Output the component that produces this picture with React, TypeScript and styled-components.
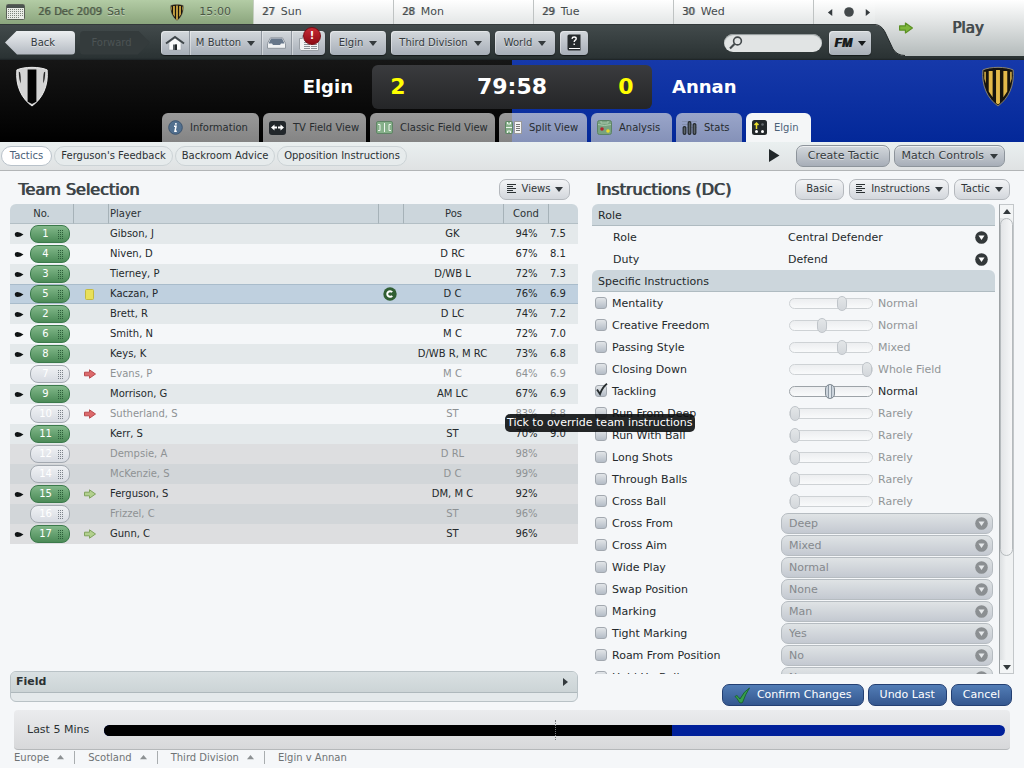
import React from 'react';
import styled, { createGlobalStyle, css } from 'styled-components';

const GlobalStyle = createGlobalStyle`
  *, *::before, *::after { box-sizing: border-box; }
  body {
    margin: 0;
    background: #f5f7f9;
    color: #2b3133;
    font-family: "DejaVu Sans", Verdana, sans-serif;
    font-size: 10px;
    line-height: 14px;
  }
  button, select, input { font: inherit; color: inherit; margin: 0; }
  button { cursor: pointer; white-space: nowrap; }
  a { color: inherit; text-decoration: none; }
  h2 { margin: 0; font-weight: normal; }
`;

const Page = styled.div`
  display: flex;
  flex-direction: column;
  height: 100vh;
  min-height: 640px;
  overflow: hidden;
`;

/* ---------- header ---------- */

const Header = styled.header`
  display: grid;
  grid-template-columns: minmax(0, 1fr) 149px;
  height: 60px;
  background: linear-gradient(#434b4c 24px, #2a3233 58px, #1c2224 60px);
`;

const Calendar = styled.div`
  display: grid;
  grid-template-columns: 254fr 140fr 140fr 140fr 140fr 61fr;
  height: 25px;
  border-bottom: 1px solid #33393a;
  background: linear-gradient(#ffffff, #e3e6e6);
`;

const Today = styled.div`
  display: flex;
  align-items: center;
  padding: 0 22px 0 6px;
  background: linear-gradient(#b3cca5, #8ba57d);
  border-right: 1px solid #c4cec0;
  font-size: 11px;
  color: #4a5745;
  text-shadow: 0 1px 0 rgba(255, 255, 255, 0.4);
`;

const TodayDate = styled.span`
  margin: 0 5px 0 13px;
  font-size: 10px;
  text-shadow: 1px 0 0 rgba(74, 87, 69, 0.6);
`;

const KickOff = styled.span`
  display: flex;
  align-items: center;
  gap: 15px;
  margin-left: auto;
`;

const Day = styled.div`
  display: flex;
  align-items: center;
  gap: 6px;
  padding: 0 8px;
  border-right: 1px solid #bfc3c3;
  font-size: 11px;
  color: #454b4d;
`;

const DayNumber = styled.span`
  font-size: 10px;
  text-shadow: 1px 0 0 rgba(69, 75, 77, 0.7);
`;

const DayNav = styled.div`
  display: flex;
  align-items: center;
  justify-content: center;
  gap: 10px;
  padding-left: 8px;
`;

const IconButton = styled.button`
  display: inline-flex;
  align-items: center;
  justify-content: center;
  padding: 0;
  border: 0;
  background: none;
`;

const Toolbar = styled.nav`
  display: flex;
  align-items: center;
  height: 35px;
  padding: 0 4px 0 5px;
  gap: 5px;
`;

const steel = css`
  background: linear-gradient(#d3d8dc, #a7aeb8);
  color: #343a3d;
  text-shadow: 0 1px 0 rgba(255, 255, 255, 0.5);
`;

const Back = styled.button`
  width: 70px;
  height: 24px;
  padding: 0 0 0 6px;
  border: 0;
  border-radius: 4px;
  clip-path: polygon(0 50%, 12px 0, 100% 0, 100% 100%, 12px 100%);
  ${steel}
  background: linear-gradient(#eceff1, #b2b8c0);
`;

const Forward = styled.button`
  width: 70px;
  height: 24px;
  margin-right: 6px;
  padding: 0 7px 0 0;
  border: 0;
  border-radius: 4px;
  clip-path: polygon(0 0, 58px 0, 100% 50%, 58px 100%, 0 100%);
  background: #343b3c;
  color: #4c5354;
`;

const ToolGroup = styled.div`
  display: flex;
  height: 24px;
  border-radius: 4px;
  box-shadow: 0 1px 1px #15191a;
  ${steel}
`;

const Tool = styled.button<{ $w: number }>`
  position: relative;
  display: flex;
  align-items: center;
  justify-content: center;
  gap: 6px;
  width: ${(p) => p.$w}px;
  height: 24px;
  padding: 0;
  border: 0;
  border-right: 1px solid #8f969e;
  box-shadow: inset 1px 1px 0 rgba(255, 255, 255, 0.4);
  background: none;
  text-shadow: inherit;
  &:first-child { border-radius: 4px 0 0 4px; }
  &:last-child { border-right: 0; border-radius: 0 4px 4px 0; }
  &:only-child { border-radius: 4px; }
`;

const Alert = styled.span`
  position: absolute;
  top: -4px;
  right: 4px;
  width: 18px;
  height: 18px;
  border-radius: 9px;
  border: 1px solid #7a0c14;
  background: linear-gradient(#c62a34, #8e0a14);
  color: #fff;
  text-shadow: none;
  line-height: 16px;
  text-align: center;
  font-weight: bold;
`;

const Search = styled.label`
  display: flex;
  align-items: center;
  width: 98px;
  height: 18px;
  margin-left: auto;
  margin-right: 2px;
  padding: 0 8px 0 5px;
  border-radius: 9px;
  background: #e1e4e4;
  box-shadow: inset 0 1px 1px #8f9697;
  input { flex: 1; min-width: 0; border: 0; padding: 0 4px; background: none; outline: none; }
`;

const Fm = styled.span`
  font-family: "Liberation Sans", Arial, sans-serif;
  font-size: 12px;
  font-weight: bold;
  font-style: italic;
  color: #15191b;
  text-shadow: 1px 0 0 #15191b;
`;

const PlayButton = styled.button`
  position: relative;
  display: flex;
  align-items: center;
  height: 56px;
  padding: 0 0 0 24px;
  gap: 39px;
  border: 0;
  background: none;
  color: #43494c;
  font-size: 15px;
  text-shadow: 1px 0 0 #43494c;
  > svg:first-child { position: absolute; inset: 0; }
  > * { position: relative; }
`;

/* ---------- scoreboard ---------- */

const Scoreboard = styled.section`
  display: flex;
  flex-direction: column;
  justify-content: space-between;
  height: 82px;
  background:
    linear-gradient(#161616, #000000) left / 50% 100% no-repeat,
    linear-gradient(#1639aa, #032899);
`;

const ScoreRow = styled.div`
  display: grid;
  grid-template-columns: 1fr 280px 1fr;
  align-items: center;
  height: 53px;
  color: #fff;
  font-size: 18px;
  font-weight: bold;
`;

const Side = styled.div<{ $away?: boolean }>`
  display: flex;
  flex-direction: ${(p) => (p.$away ? 'row-reverse' : 'row')};
  justify-content: space-between;
  align-items: center;
  padding: ${(p) => (p.$away ? '0 9px 0 20px' : '0 19px 0 15px')};
`;

const Score = styled.div`
  display: grid;
  grid-template-columns: 52px 1fr 52px;
  align-items: center;
  height: 44px;
  border-radius: 6px;
  background: linear-gradient(#3a3b3e, #242527);
  font-size: 22px;
  text-align: center;
  b { color: #ffff00; }
`;

const Tabs = styled.nav`
  display: flex;
  gap: 4px;
  padding: 0 162px;
`;

const Tab = styled.a<{ $w: number; $active?: boolean }>`
  display: flex;
  align-items: center;
  gap: 7px;
  flex: none;
  width: ${(p) => p.$w}px;
  height: 29px;
  padding-left: 6px;
  border-radius: 6px 6px 0 0;
  white-space: nowrap;
  background: ${(p) => (p.$active ? '#f4f6f7' : 'linear-gradient(rgba(222,222,222,0.68), rgba(200,200,200,0.66))')};
  color: ${(p) => (p.$active ? '#4c6178' : '#272c2f')};
`;

/* ---------- sub navigation ---------- */

const SubNav = styled.nav`
  display: flex;
  align-items: center;
  gap: 2px;
  height: 29px;
  padding: 0 19px 1px 1px;
  border-bottom: 1px solid #b2b5b7;
  background: linear-gradient(#eaf0f0, #dfe2e3);
`;

const Pill = styled.a<{ $w: number; $active?: boolean }>`
  width: ${(p) => p.$w}px;
  height: 20px;
  border: 1px solid ${(p) => (p.$active ? '#b9c2ca' : '#ccd3d6')};
  border-radius: 10px;
  line-height: 18px;
  text-align: center;
  white-space: nowrap;
  background: ${(p) => (p.$active ? '#ffffff' : '#e6ebec')};
  color: ${(p) => (p.$active ? '#4c6178' : '#2b3133')};
`;

const SubActions = styled.div`
  display: flex;
  align-items: center;
  gap: 4px;
  margin-left: auto;
  > :first-child { margin-right: 12px; }
`;

const Control = styled.button`
  display: flex;
  align-items: center;
  justify-content: center;
  gap: 6px;
  height: 22px;
  padding: 0 6px;
  min-width: 94px;
  border: 1px solid #8d949b;
  border-radius: 7px;
  font-size: 11px;
  box-shadow: inset 0 1px 0 rgba(255, 255, 255, 0.6);
  ${steel}
`;

/* ---------- panels ---------- */

const Main = styled.main`
  flex: 1;
  min-height: 0;
  display: grid;
  grid-template-columns: minmax(0, 568fr) minmax(0, 422fr);
  gap: 14px;
  padding: 0 10px 4px;
`;

const Panel = styled.section`
  position: relative;
  display: flex;
  flex-direction: column;
  min-height: 0;
`;

const PanelHead = styled.div<{ $wide?: boolean }>`
  display: flex;
  align-items: center;
  gap: 5px;
  flex: none;
  height: 33px;
  padding: ${(p) => (p.$wide ? '3px 8px 0 8px' : '3px 4px 0 4px')};
`;

const Heading = styled.h2`
  flex: 1;
  padding-top: 2px;
  font-size: 16px;
  line-height: 20px;
  white-space: nowrap;
  color: #3b4347;
  text-shadow: 1px 0 0 #3b4347;
`;

const LightButton = styled.button<{ $w: number }>`
  display: flex;
  align-items: center;
  justify-content: center;
  gap: 5px;
  flex: none;
  width: ${(p) => p.$w}px;
  height: 21px;
  padding: 0;
  border: 1px solid #b4b8bd;
  border-radius: 7px;
  background: linear-gradient(#f3f4f6, #d3d7dc);
  color: #2e3437;
`;

/* ---------- squad table ---------- */

const Squad = styled.table`
  width: 100%;
  table-layout: fixed;
  border-collapse: separate;
  border-spacing: 0;
  th {
    height: 20px;
    padding: 0;
    background: #ccd6dc;
    border-right: 1px solid #a6b2b8;
    border-bottom: 1px solid #b3bfc5;
    font-weight: normal;
    text-align: center;
  }
  th:first-child { border-top-left-radius: 6px; }
  th:last-child { border-right: 0; border-top-right-radius: 6px; }
  th:nth-child(3) { text-align: left; padding-left: 1px; }
`;

const rowTone = { odd: '#e4e9eb', even: '#f5f7f9', benchA: '#dddee0', benchB: '#d2d6d9', picked: '#bfd0df' };

const PlayerRow = styled.tr<{ $tone: keyof typeof rowTone; $faded: boolean }>`
  background: ${(p) => rowTone[p.$tone]};
  color: ${(p) => (p.$faded ? '#8e9294' : '#24292b')};
  td {
    height: 20px;
    padding: 0;
    text-align: center;
    vertical-align: middle;
    white-space: nowrap;
    ${(p) => p.$tone === 'picked' && 'box-shadow: inset 0 1px 0 #a9bccb, inset 0 -1px 0 #a9bccb;'}
  }
  td > svg { display: block; margin: 0 auto; }
  td:nth-child(2) { padding-right: 4px; }
  td:nth-child(4), td:nth-child(5) { padding-right: 3px; }
  td:nth-child(3), td:nth-child(7) { text-align: left; padding-left: 1px; }
`;

const Slot = styled.div`
  display: flex;
  align-items: center;
  gap: 6px;
  padding-left: 4px;
  > svg { flex: none; }
`;

const Shirt = styled.button<{ $on: boolean }>`
  display: flex;
  align-items: center;
  width: 40px;
  height: 18px;
  padding: 0 6px 0 0;
  border: 1px solid ${(p) => (p.$on ? '#3b7a4b' : '#a3a9b0')};
  border-radius: 8px;
  background: ${(p) => (p.$on ? 'linear-gradient(#82b88a, #4b8a57)' : 'linear-gradient(#eff1f4, #d7dbe2)')};
  color: #fff;
  line-height: 16px;
  span { flex: 1; padding-left: 2px; }
`;

const FieldPanel = styled.div`
  margin-top: auto;
  margin-bottom: 4px;
  height: 31px;
  border: 1px solid #b9c2c6;
  border-radius: 6px;
  background: #e4e9eb;
  overflow: hidden;
`;

const FieldToggle = styled.button`
  display: flex;
  align-items: center;
  justify-content: space-between;
  width: 100%;
  height: 21px;
  padding: 0 8px 0 5px;
  border: 0;
  border-bottom: 1px solid #aeb8bc;
  background: linear-gradient(#d9e0e2, #ccd4d6);
  font-size: 11px;
  font-weight: bold;
`;

/* ---------- instructions ---------- */

const ListArea = styled.div`
  flex: 1;
  min-height: 0;
  display: flex;
  gap: 4px;
`;

const List = styled.div`
  flex: 1;
  min-width: 0;
  overflow: hidden;
  font-size: 11px;
  color: #24292b;
`;

const Section = styled.div`
  height: 22px;
  padding: 0 6px;
  border-bottom: 1px solid #afbbc1;
  border-radius: 6px 6px 0 0;
  background: #ccd6dc;
  line-height: 24px;
`;

const Row = styled.div`
  display: grid;
  grid-template-columns: minmax(0, 1fr) 212px;
  align-items: center;
  height: 22px;
  padding-right: 2px;
`;

const RowName = styled.label<{ $plain?: boolean }>`
  display: flex;
  align-items: center;
  gap: 5px;
  padding-left: ${(p) => (p.$plain ? 21 : 3)}px;
  white-space: nowrap;
`;

const RowText = styled.span`
  padding-top: 2px;
`;

const Tick = styled.input`
  appearance: none;
  flex: none;
  width: 12px;
  height: 12px;
  border: 1px solid #a3a9b0;
  border-radius: 3px;
  background: linear-gradient(#e2e5e8, #b5bdc7);
`;

const TickBox = styled.span`
  position: relative;
  display: flex;
  svg { position: absolute; left: 0; top: -2px; display: none; pointer-events: none; }
  input:checked + svg { display: block; }
`;

const SliderBox = styled.div<{ $off: boolean }>`
  display: flex;
  align-items: center;
  gap: 5px;
  padding-left: 8px;
  color: ${(p) => (p.$off ? '#929698' : '#24292b')};
`;

const Slider = styled.input<{ $off: boolean }>`
  appearance: none;
  display: block;
  width: 84px;
  height: 15px;
  background: none;
  &::-webkit-slider-runnable-track {
    height: 11px;
    border: 1px solid ${(p) => (p.$off ? '#ced2d5' : '#9da3a8')};
    border-radius: 6px;
    background: linear-gradient(#eceef0, #f9fafb);
  }
  &::-webkit-slider-thumb {
    appearance: none;
    width: 10px;
    height: 15px;
    margin-top: -3px;
    border: 1px solid ${(p) => (p.$off ? '#c0c5ca' : '#7f8991')};
    border-radius: 5px;
    background: ${(p) =>
      p.$off
        ? 'linear-gradient(#e3e6e8, #d3d7db)'
        : 'linear-gradient(90deg, #ccd4dc 2px, #8f9aa5 2px, #8f9aa5 3px, #dfe5ea 3px, #dfe5ea 5px, #8f9aa5 5px, #8f9aa5 6px, #ccd4dc 6px)'};
  }
`;

const Picker = styled.div<{ $plain?: boolean }>`
  position: relative;
  select {
    appearance: none;
    display: block;
    width: 100%;
    height: 21px;
    padding: 2px 24px 0 ${(p) => (p.$plain ? 6 : 7)}px;
    border: 1px solid ${(p) => (p.$plain ? 'transparent' : '#b6bcc1')};
    border-radius: 7px;
    background: ${(p) => (p.$plain ? 'none' : 'linear-gradient(#dfe3e5, #c4c9d1)')};
    color: ${(p) => (p.$plain ? '#24292b' : '#85898d')};
    opacity: 1;
  }
  svg { position: absolute; top: 4px; right: 5px; pointer-events: none; }
`;

const Scroll = styled.div`
  flex: none;
  display: flex;
  flex-direction: column;
  width: 15px;
  border: 1px solid #c3c7ca;
  border-left-color: #9da2a5;
  background: linear-gradient(90deg, #dcdfe1, #f0f2f3 6px);
  button { height: 13px; flex: none; background: #f3f5f6; }
`;

const Thumb = styled.div`
  flex: 337;
  border: 1px solid #b5babd;
  border-radius: 7px;
  background: linear-gradient(90deg, #e3e5e7, #f6f7f8);
`;

const Rest = styled.div`
  flex: 104;
`;

const Actions = styled.div`
  display: flex;
  justify-content: flex-end;
  gap: 4px;
  padding: 10px 2px 0;
`;

const BlueButton = styled.button`
  display: flex;
  align-items: center;
  gap: 6px;
  height: 22px;
  padding: 0 11px;
  border: 1px solid #233f72;
  border-radius: 7px;
  background: linear-gradient(#527db6, #34578f);
  color: #fff;
  font-size: 11px;
`;

const Tooltip = styled.div`
  position: absolute;
  top: 243px;
  left: -87px;
  height: 18px;
  padding: 0 2px;
  border-radius: 5px;
  background: rgba(12, 14, 15, 0.9);
  color: #fff;
  font-size: 11px;
  line-height: 18px;
  white-space: nowrap;
`;

/* ---------- bottom ---------- */

const Momentum = styled.section`
  display: flex;
  align-items: center;
  flex: none;
  gap: 15px;
  height: 40px;
  margin: 0 14px;
  padding: 1px 5px 0 13px;
  border-bottom: 1px solid #b5b8ba;
  border-radius: 4px;
  background: linear-gradient(#ebecee, #d7d8da);
  font-size: 11px;
`;

const GaugeWrap = styled.div`
  position: relative;
  flex: 1;
  &::after {
    content: "";
    position: absolute;
    top: -5px;
    bottom: -4px;
    left: 50%;
    border-left: 1px dotted #77797b;
  }
`;

const Gauge = styled.div`
  height: 11px;
  border-radius: 6px;
  background: #00209a;
  overflow: hidden;
`;

const GaugeFill = styled.div`
  height: 100%;
  background: #000;
`;

const Crumbs = styled.footer`
  display: flex;
  flex: none;
  height: 18px;
  padding: 1px 0 0 14px;
  color: #6f7375;
`;

const Crumb = styled.a`
  display: flex;
  align-items: center;
  gap: 8px;
  height: 13px;
  padding-right: 10px;
  margin-right: 13px;
  border-right: 1px solid #a9adaf;
  &:last-child { border-right: 0; }
`;

/* ---------- icons ---------- */

const Caret = ({ size = 8, dir = 'down', color = '#343a3d' }: { size?: number; dir?: 'down' | 'up' | 'left' | 'right'; color?: string }) => {
  const d = { down: 'M0 2h8L4 7z', up: 'M0 6h8L4 1z', left: 'M6 0v8L1 4z', right: 'M2 0v8l5-4z' }[dir];
  return (
    <svg width={size} height={size} viewBox="0 0 8 8" aria-hidden="true">
      <path d={d} fill={color} />
    </svg>
  );
};

const Crest = ({ w, h, kind }: { w: number; h: number; kind: 'home' | 'away' }) => (
  <svg width={w} height={h} viewBox="0 0 34 42" aria-hidden="true">
    {kind === 'home' ? (
      <>
        <path d="M1.500 4C9 .5 25 .5 32.500 4 34 20 28 33 17 41 6 33 0 20 1.500 4z" fill="#d4d4d4" stroke="#efefef" />
        <path d="M12.500 3.500h9v33L17 39l-4.500-2.500z" fill="#050505" />
        <path d="M3.500 6q0 8 2 12 .2-8-.8-11.500zM30.500 6q0 8-2 12-.2-8 .8-11.500z" fill="#2a2a2a" />
      </>
    ) : (
      <>
        <path d="M1.500 4C9 .5 25 .5 32.500 4 34 20 28 33 17 41 6 33 0 20 1.500 4z" fill="#15130e" stroke="#8d8670" />
        <path d="M7.500 5h4v27l-4-6zM15 4h4v34l-2 1.500-2-1.500zM22.500 5h4v21l-4 6zM3 6h1.500v12L3 13zM29.500 6H31v7l-1.500 5z" fill="#e3b94a" />
      </>
    )}
  </svg>
);

const ListIcon = () => (
  <svg width="11" height="10" viewBox="0 0 11 10" stroke="#2b3133" aria-hidden="true">
    <path d="M1 .5h9M1 2.500h6M1 4.500h9M1 6.500h6M1 8.500h9" />
  </svg>
);

const ArrowIcon = ({ fill, edge, w = 12 }: { fill: string; edge: string; w?: number }) => (
  <svg width={w} height={w - 2} viewBox="0 0 12 10" aria-hidden="true">
    <path d="M.5 3.200h5V.800L11.500 5 5.500 9.200V6.800H.5z" fill={fill} stroke={edge} strokeLinejoin="round" />
  </svg>
);

const PinIcon = () => (
  <svg width="10" height="7" viewBox="0 0 10 7" aria-hidden="true">
    <path d="M3.500 1Q6 1 9.500 3.500 6 6 3.500 6 1 6 .8 3.800.6 1 3.500 1z" fill="#101415" />
  </svg>
);

const Grip = ({ on }: { on: boolean }) => (
  <svg width="5" height="9" viewBox="0 0 5 9" aria-hidden="true">
    <path d="M.5 0v9M2.500 0v9M4.500 0v9" stroke={on ? '#2d5f3a' : '#7c838a'} strokeDasharray="1 1" />
  </svg>
);

const CaptainIcon = () => (
  <svg width="14" height="14" viewBox="0 0 14 14" aria-hidden="true">
    <circle cx="7" cy="7" r="6.700" fill="#315f33" />
    <path d="M9.200 5.200A2.800 2.800 0 1 0 9.200 8.800" fill="none" stroke="#fff" strokeWidth="2" />
  </svg>
);

const CardIcon = () => (
  <svg width="9" height="11" viewBox="0 0 9 11" aria-hidden="true">
    <rect x=".5" y=".5" width="8" height="10" rx="1" fill="#e8e05a" stroke="#c4ba3e" />
  </svg>
);

const DropDisc = ({ off }: { off?: boolean }) => (
  <svg width="13" height="13" viewBox="0 0 13 13" aria-hidden="true">
    <circle cx="6.500" cy="6.500" r="6.300" fill={off ? '#8b8f92' : '#33383a'} />
    <path d="M3.500 4.500h6l-3 4.500z" fill={off ? '#e6e9eb' : '#fff'} />
  </svg>
);

const CheckMark = () => (
  <svg width="13" height="13" viewBox="0 0 13 13" aria-hidden="true">
    <path d="M2 6.500 5 11Q7.500 4 12 .8" fill="none" stroke="#262c2e" strokeWidth="1.900" />
  </svg>
);

const CalendarIcon = () => (
  <svg width="19" height="16" viewBox="0 0 19 16" aria-hidden="true">
    <rect x=".5" y=".5" width="18" height="15" rx="1" fill="#e9ece6" stroke="#5a6156" />
    <path d="M1 1h17v3H1z" fill="#4b534f" />
    <path d="M2 5.500h15M2 7.500h15M2 9.500h15M2 11.500h15M2 13.500h12" stroke="#7d857b" strokeDasharray="1 1" />
  </svg>
);

const HomeIcon = () => (
  <svg width="20" height="16" viewBox="0 0 20 16" aria-hidden="true">
    <path d="M4 7.500 10 3l6 4.500V15H4z" fill="#fafbfc" stroke="#a3a9af" strokeWidth=".6" />
    <path d="M1 8.500 10 2l9 6.500" fill="none" stroke="#3f464a" strokeWidth="2" />
    <path d="M8 9.500h4V15H8z" fill="#5a6166" />
    <path d="M10 9.500h2V15h-2z" fill="#22282b" />
  </svg>
);

const InboxIcon = () => (
  <svg width="19" height="12" viewBox="0 0 19 12" aria-hidden="true">
    <path d="M3.500 .8h12l3 5.500v5H.5v-5z" fill="#f1f3f4" stroke="#8f969e" strokeLinejoin="round" />
    <path d="M4 1.500h11l2.500 5H14l-1 1.500H6L5 6.500H1.500z" fill="#67778a" />
  </svg>
);

const NewsIcon = () => (
  <svg width="20" height="16" viewBox="0 0 20 16" aria-hidden="true">
    <path d="M.5 3.500h3v-3h16v15H2L.5 14z" fill="#f2f3f4" stroke="#9aa0a6" />
    <path d="M5 3.500h6M5 5.500h6M5 7.500h6M5 9.500h13M5 11.500h13M5 13.500h13" stroke="#8b9197" strokeDasharray="6 1" />
  </svg>
);

const HelpIcon = () => (
  <svg width="14" height="17" viewBox="0 0 14 17" aria-hidden="true">
    <path d="M.5 2Q.5.500 2 .5h11.500v16H2Q.5 16.500.5 15z" fill="#262b2d" />
    <path d="M2 14.500h11" stroke="#fff" />
    <path d="M5 4.800q.2-1.800 2.200-1.800t2 1.700q0 1-1.200 1.700-.8.500-.8 1.600M7.200 9.500v1.500" fill="none" stroke="#fff" strokeWidth="1.400" />
  </svg>
);

const SearchIcon = () => (
  <svg width="14" height="14" viewBox="0 0 14 14" fill="none" stroke="#43494b" aria-hidden="true">
    <circle cx="8.500" cy="5" r="3.900" strokeWidth="1.600" />
    <path d="M5.500 8 1 12.500" strokeWidth="2.200" />
  </svg>
);

const BigTick = () => (
  <svg width="17" height="17" viewBox="0 0 17 17" aria-hidden="true">
    <path d="M1 9.500q2-2 3 0l2 2.500Q10 4 15.500 1 11.500 7 8.500 15.500q-1.500 1-3 0Q3 11 1 9.500z" fill="#35a04c" stroke="#155a26" strokeWidth=".8" />
  </svg>
);

const tabIcons: Record<string, React.ReactNode> = {
  info: (
    <svg width="15" height="15" viewBox="0 0 15 15" aria-hidden="true">
      <circle cx="7.500" cy="7.500" r="6.800" fill="#52708f" stroke="#3d5570" />
      <path d="M6 6.200h2l-1 5h1.800M7.900 3v1.800" fill="none" stroke="#fff" strokeWidth="1.500" />
    </svg>
  ),
  tv: (
    <svg width="17" height="14" viewBox="0 0 17 14" aria-hidden="true">
      <rect width="17" height="14" rx="3" fill="#22272b" />
      <path d="M2 6.500 5.500 3.500v2H8v2H5.500v2zM15 6.500l-3.500-3v2H9v2h2.500v2z" fill="#fff" />
    </svg>
  ),
  classic: (
    <svg width="17" height="13" viewBox="0 0 17 13" aria-hidden="true">
      <rect x=".5" y=".5" width="16" height="12" rx="1.500" fill="#86b08a" stroke="#5f8465" />
      <path d="M8.500 2v9M2 3.500h2v6H2M15 3.500h-2v6h2" fill="none" stroke="#eef5ee" />
    </svg>
  ),
  split: (
    <svg width="17" height="13" viewBox="0 0 17 13" aria-hidden="true">
      <rect x=".5" y=".5" width="7" height="12" rx="1" fill="#86b08a" stroke="#5f8465" />
      <path d="M1 6.500h6M2.500 1v2h3V1M2.500 12v-2h3v2" fill="none" stroke="#eef5ee" />
      <rect x="9.500" y=".5" width="7" height="12" fill="#f4f4f4" stroke="#9a9a9a" />
      <path d="M11 3.500h4M11 5.500h4M11 7.500h4M11 9.500h4" stroke="#777" />
    </svg>
  ),
  analysis: (
    <svg width="15" height="15" viewBox="0 0 15 15" aria-hidden="true">
      <rect x=".5" y=".5" width="14" height="14" rx="2" fill="#78a27f" stroke="#5c8265" />
      <path d="M1 4.500q6.500 2 13 0M4 1v2h7V1" fill="none" stroke="#a9c9ae" />
      <circle cx="5" cy="9" r="1.800" fill="#b3242c" />
      <circle cx="11" cy="11" r="1.800" fill="#e8dc2c" />
    </svg>
  ),
  stats: (
    <svg width="15" height="15" viewBox="0 0 15 15" aria-hidden="true">
      <path d="M0 1.500h15M0 4.500h15M0 7.500h15" stroke="#7b86a0" strokeWidth=".6" />
      <path d="M2.500 8v5M7.500 3v10M12.500 5v8" stroke="#22272b" strokeWidth="3.800" strokeLinecap="round" />
      <path d="M2.500 8v5M7.500 3v10M12.500 5v8" stroke="#5d646b" strokeWidth="1.600" strokeLinecap="round" />
    </svg>
  ),
  tactics: (
    <svg width="15" height="15" viewBox="0 0 15 15" aria-hidden="true">
      <rect width="15" height="15" rx="2.500" fill="#24292b" />
      <path d="M4.500 9V3M2.500 5l2-2 2 2" fill="none" stroke="#e8dc2c" strokeWidth="1.500" />
      <circle cx="4.500" cy="11.500" r="1.500" fill="#fff" />
      <circle cx="10.500" cy="11.500" r="1.500" fill="#fff" />
      <circle cx="10.500" cy="4.500" r="1.300" fill="#666c6e" />
    </svg>
  ),
};

/* ---------- data ---------- */

type Player = {
  no: number; name: string; pos: string; cond: string; rating?: string;
  on: boolean; bench?: boolean; mark?: 'card' | 'off' | 'in'; captain?: boolean; picked?: boolean;
};

const players: Player[] = [
  { no: 1, name: 'Gibson, J', pos: 'GK', cond: '94%', rating: '7.5', on: true },
  { no: 4, name: 'Niven, D', pos: 'D RC', cond: '67%', rating: '8.1', on: true },
  { no: 3, name: 'Tierney, P', pos: 'D/WB L', cond: '72%', rating: '7.3', on: true },
  { no: 5, name: 'Kaczan, P', pos: 'D C', cond: '76%', rating: '6.9', on: true, mark: 'card', captain: true, picked: true },
  { no: 2, name: 'Brett, R', pos: 'D LC', cond: '74%', rating: '7.2', on: true },
  { no: 6, name: 'Smith, N', pos: 'M C', cond: '72%', rating: '7.0', on: true },
  { no: 8, name: 'Keys, K', pos: 'D/WB R, M RC', cond: '73%', rating: '6.8', on: true },
  { no: 7, name: 'Evans, P', pos: 'M C', cond: '64%', rating: '6.9', on: false, mark: 'off' },
  { no: 9, name: 'Morrison, G', pos: 'AM LC', cond: '67%', rating: '6.9', on: true },
  { no: 10, name: 'Sutherland, S', pos: 'ST', cond: '83%', rating: '6.8', on: false, mark: 'off' },
  { no: 11, name: 'Kerr, S', pos: 'ST', cond: '70%', rating: '9.0', on: true },
  { no: 12, name: 'Dempsie, A', pos: 'D RL', cond: '98%', on: false, bench: true },
  { no: 14, name: 'McKenzie, S', pos: 'D C', cond: '99%', on: false, bench: true },
  { no: 15, name: 'Ferguson, S', pos: 'DM, M C', cond: '92%', on: true, bench: true, mark: 'in' },
  { no: 16, name: 'Frizzel, C', pos: 'ST', cond: '96%', on: false, bench: true },
  { no: 17, name: 'Gunn, C', pos: 'ST', cond: '96%', on: true, bench: true, mark: 'in' },
];

const sliders: { name: string; at: number; value: string; on?: boolean }[] = [
  { name: 'Mentality', at: 65, value: 'Normal' },
  { name: 'Creative Freedom', at: 38, value: 'Normal' },
  { name: 'Passing Style', at: 65, value: 'Mixed' },
  { name: 'Closing Down', at: 100, value: 'Whole Field' },
  { name: 'Tackling', at: 49, value: 'Normal', on: true },
  { name: 'Run From Deep', at: 0, value: 'Rarely' },
  { name: 'Run With Ball', at: 0, value: 'Rarely' },
  { name: 'Long Shots', at: 0, value: 'Rarely' },
  { name: 'Through Balls', at: 0, value: 'Rarely' },
  { name: 'Cross Ball', at: 0, value: 'Rarely' },
];

const choices = [
  ['Cross From', 'Deep'],
  ['Cross Aim', 'Mixed'],
  ['Wide Play', 'Normal'],
  ['Swap Position', 'None'],
  ['Marking', 'Man'],
  ['Tight Marking', 'Yes'],
  ['Roam From Position', 'No'],
  ['Hold Up Ball', 'No'],
];

const days = [['27', 'Sun'], ['28', 'Mon'], ['29', 'Tue'], ['30', 'Wed']];

const tabs: { icon: string; label: string; width: number }[] = [
  { icon: 'info', label: 'Information', width: 97 },
  { icon: 'tv', label: 'TV Field View', width: 103 },
  { icon: 'classic', label: 'Classic Field View', width: 125 },
  { icon: 'split', label: 'Split View', width: 88 },
  { icon: 'analysis', label: 'Analysis', width: 81 },
  { icon: 'stats', label: 'Stats', width: 66 },
  { icon: 'tactics', label: 'Elgin', width: 65 },
];

const toneOf = (p: Player, i: number): keyof typeof rowTone => {
  if (p.picked) return 'picked';
  if (p.bench) return i % 2 ? 'benchA' : 'benchB';
  return i % 2 ? 'even' : 'odd';
};

const PlayerLine = ({ p, i }: { p: Player; i: number }) => (
  <PlayerRow $tone={toneOf(p, i)} $faded={!p.on}>
    <td>
      <Slot>
        {p.on ? <PinIcon /> : <svg width="10" height="7" />}
        <Shirt $on={p.on}>
          <span>{p.no}</span>
          <Grip on={p.on} />
        </Shirt>
      </Slot>
    </td>
    <td>
      {p.mark === 'card' && <CardIcon />}
      {p.mark === 'off' && <ArrowIcon fill="#dd6a6c" edge="#b84a4e" />}
      {p.mark === 'in' && <ArrowIcon fill="#b2d08e" edge="#7fa35c" />}
    </td>
    <td>{p.name}</td>
    <td>{p.captain && <CaptainIcon />}</td>
    <td>{p.pos}</td>
    <td>{p.cond}</td>
    <td>{p.rating}</td>
  </PlayerRow>
);

const TickInput = ({ on }: { on?: boolean }) => (
  <TickBox>
    <Tick type="checkbox" defaultChecked={on} />
    <CheckMark />
  </TickBox>
);

const squadColumns = (
  <colgroup>
    <col width={64} />
    <col width={35} />
    <col />
    <col width={25} />
    <col width={100} />
    <col width={45} />
    <col width={29} />
  </colgroup>
);

export default function App() {
  return (
    <Page>
      <GlobalStyle />
      <Header>
        <div>
          <Calendar>
            <Today>
              <CalendarIcon />
              <TodayDate>26 Dec 2009</TodayDate>
              <span>Sat</span>
              <KickOff>
                <Crest w={14} h={17} kind="away" />
                15:00
              </KickOff>
            </Today>
            {days.map(([n, d]) => (
              <Day key={n}>
                <DayNumber>{n}</DayNumber>
                {d}
              </Day>
            ))}
            <DayNav>
              <IconButton aria-label="Previous day"><Caret size={7} dir="left" /></IconButton>
              <IconButton aria-label="Today">
                <svg width="10" height="10" viewBox="0 0 10 10"><circle cx="5" cy="5" r="4.800" fill="#43494b" /></svg>
              </IconButton>
              <IconButton aria-label="Next day"><Caret size={7} dir="right" /></IconButton>
            </DayNav>
          </Calendar>
          <Toolbar>
            <Back>Back</Back>
            <Forward>Forward</Forward>
            <ToolGroup>
              <Tool $w={29} aria-label="Home"><HomeIcon /></Tool>
              <Tool $w={72}>M Button <Caret /></Tool>
              <Tool $w={30} aria-label="Inbox"><InboxIcon /></Tool>
              <Tool $w={33} aria-label="News"><NewsIcon /><Alert>!</Alert></Tool>
            </ToolGroup>
            <ToolGroup><Tool $w={56}>Elgin <Caret /></Tool></ToolGroup>
            <ToolGroup><Tool $w={99}>Third Division <Caret /></Tool></ToolGroup>
            <ToolGroup><Tool $w={60}>World <Caret /></Tool></ToolGroup>
            <ToolGroup><Tool $w={28} aria-label="Help"><HelpIcon /></Tool></ToolGroup>
            <Search>
              <SearchIcon />
              <input type="text" aria-label="Search" />
            </Search>
            <ToolGroup><Tool $w={42}><Fm>FM</Fm><Caret color="#15191b" /></Tool></ToolGroup>
          </Toolbar>
        </div>
        <PlayButton>
          <svg width="100%" height="56" viewBox="0 0 149 56" preserveAspectRatio="none" aria-hidden="true">
            <defs>
              <linearGradient id="playFill" x2="0" y2="1">
                <stop offset="0" stopColor="#fff" />
                <stop offset="1" stopColor="#b4bbbb" />
              </linearGradient>
            </defs>
            <path d="M0 0h149v56H30Q22 56 18 49L10 32Q6 25 0 25z" fill="url(#playFill)" />
            <path d="M0 24.500Q6.500 25 10 32l8 17q4 6.500 12 6.500" fill="none" stroke="#23292a" strokeWidth="1" />
          </svg>
          <ArrowIcon w={14} fill="#7db53a" edge="#5a9022" />
          <span>Play</span>
        </PlayButton>
      </Header>

      <Scoreboard>
        <ScoreRow>
          <Side><Crest w={34} h={41} kind="home" />Elgin</Side>
          <Score><b>2</b><span>79:58</span><b>0</b></Score>
          <Side $away><Crest w={34} h={41} kind="away" />Annan</Side>
        </ScoreRow>
        <Tabs>
          {tabs.map((t) => (
            <Tab key={t.label} href="#" $w={t.width} $active={t.label === 'Elgin'}>{tabIcons[t.icon]}{t.label}</Tab>
          ))}
        </Tabs>
      </Scoreboard>

      <SubNav>
        <Pill href="#" $w={51} $active>Tactics</Pill>
        <Pill href="#" $w={119}>Ferguson's Feedback</Pill>
        <Pill href="#" $w={100}>Backroom Advice</Pill>
        <Pill href="#" $w={130}>Opposition Instructions</Pill>
        <SubActions>
          <IconButton aria-label="Run">
            <svg width="12" height="13" viewBox="0 0 12 13"><path d="M1 0l10.500 6.500L1 13z" fill="#22282a" /></svg>
          </IconButton>
          <Control>Create Tactic</Control>
          <Control>Match Controls <Caret /></Control>
        </SubActions>
      </SubNav>

      <Main>
        <Panel>
          <PanelHead $wide>
            <Heading>Team Selection</Heading>
            <LightButton $w={71}><ListIcon />Views <Caret /></LightButton>
          </PanelHead>
          <Squad>
            {squadColumns}
            <thead>
              <tr><th>No.</th><th /><th>Player</th><th /><th>Pos</th><th>Cond</th><th /></tr>
            </thead>
            <tbody>
              {players.map((p, i) => <PlayerLine key={p.no} p={p} i={i} />)}
            </tbody>
          </Squad>
          <FieldPanel>
            <FieldToggle>Field <Caret dir="right" /></FieldToggle>
          </FieldPanel>
        </Panel>

        <Panel>
          <PanelHead>
            <Heading>Instructions (DC)</Heading>
            <LightButton $w={49}>Basic</LightButton>
            <LightButton $w={100}><ListIcon />Instructions <Caret /></LightButton>
            <LightButton $w={56}>Tactic <Caret /></LightButton>
          </PanelHead>
          <ListArea>
            <List>
              <Section>Role</Section>
              {[['Role', 'Central Defender'], ['Duty', 'Defend']].map(([name, value]) => (
                <Row key={name}>
                  <RowName $plain htmlFor={`pick-${name}`}><RowText>{name}</RowText></RowName>
                  <Picker $plain>
                    <select id={`pick-${name}`}><option>{value}</option></select>
                    <DropDisc />
                  </Picker>
                </Row>
              ))}
              <Section>Specific Instructions</Section>
              {sliders.map((s) => (
                <Row key={s.name}>
                  <RowName><TickInput on={s.on} /><RowText>{s.name}</RowText></RowName>
                  <SliderBox $off={!s.on}>
                    <Slider type="range" aria-label={s.name} defaultValue={s.at} disabled={!s.on} $off={!s.on} />
                    <RowText>{s.value}</RowText>
                  </SliderBox>
                </Row>
              ))}
              {choices.map(([name, value]) => (
                <Row key={name}>
                  <RowName><TickInput /><RowText>{name}</RowText></RowName>
                  <Picker>
                    <select aria-label={name} disabled><option>{value}</option></select>
                    <DropDisc off />
                  </Picker>
                </Row>
              ))}
            </List>
            <Scroll>
              <IconButton aria-label="Scroll up"><Caret dir="up" /></IconButton>
              <Thumb />
              <Rest />
              <IconButton aria-label="Scroll down"><Caret /></IconButton>
            </Scroll>
          </ListArea>
          <Actions>
            <BlueButton><BigTick />Confirm Changes</BlueButton>
            <BlueButton>Undo Last</BlueButton>
            <BlueButton>Cancel</BlueButton>
          </Actions>
          <Tooltip role="tooltip">Tick to override team instructions</Tooltip>
        </Panel>
      </Main>

      <Momentum>
        <span>Last 5 Mins</span>
        <GaugeWrap>
          <Gauge><GaugeFill style={{ width: '63%' }} /></Gauge>
        </GaugeWrap>
      </Momentum>
      <Crumbs>
        <Crumb href="#">Europe <Caret dir="up" size={7} color="#8d9193" /></Crumb>
        <Crumb href="#">Scotland <Caret dir="up" size={7} color="#8d9193" /></Crumb>
        <Crumb href="#">Third Division <Caret dir="up" size={7} color="#8d9193" /></Crumb>
        <Crumb href="#">Elgin v Annan</Crumb>
      </Crumbs>
    </Page>
  );
}
